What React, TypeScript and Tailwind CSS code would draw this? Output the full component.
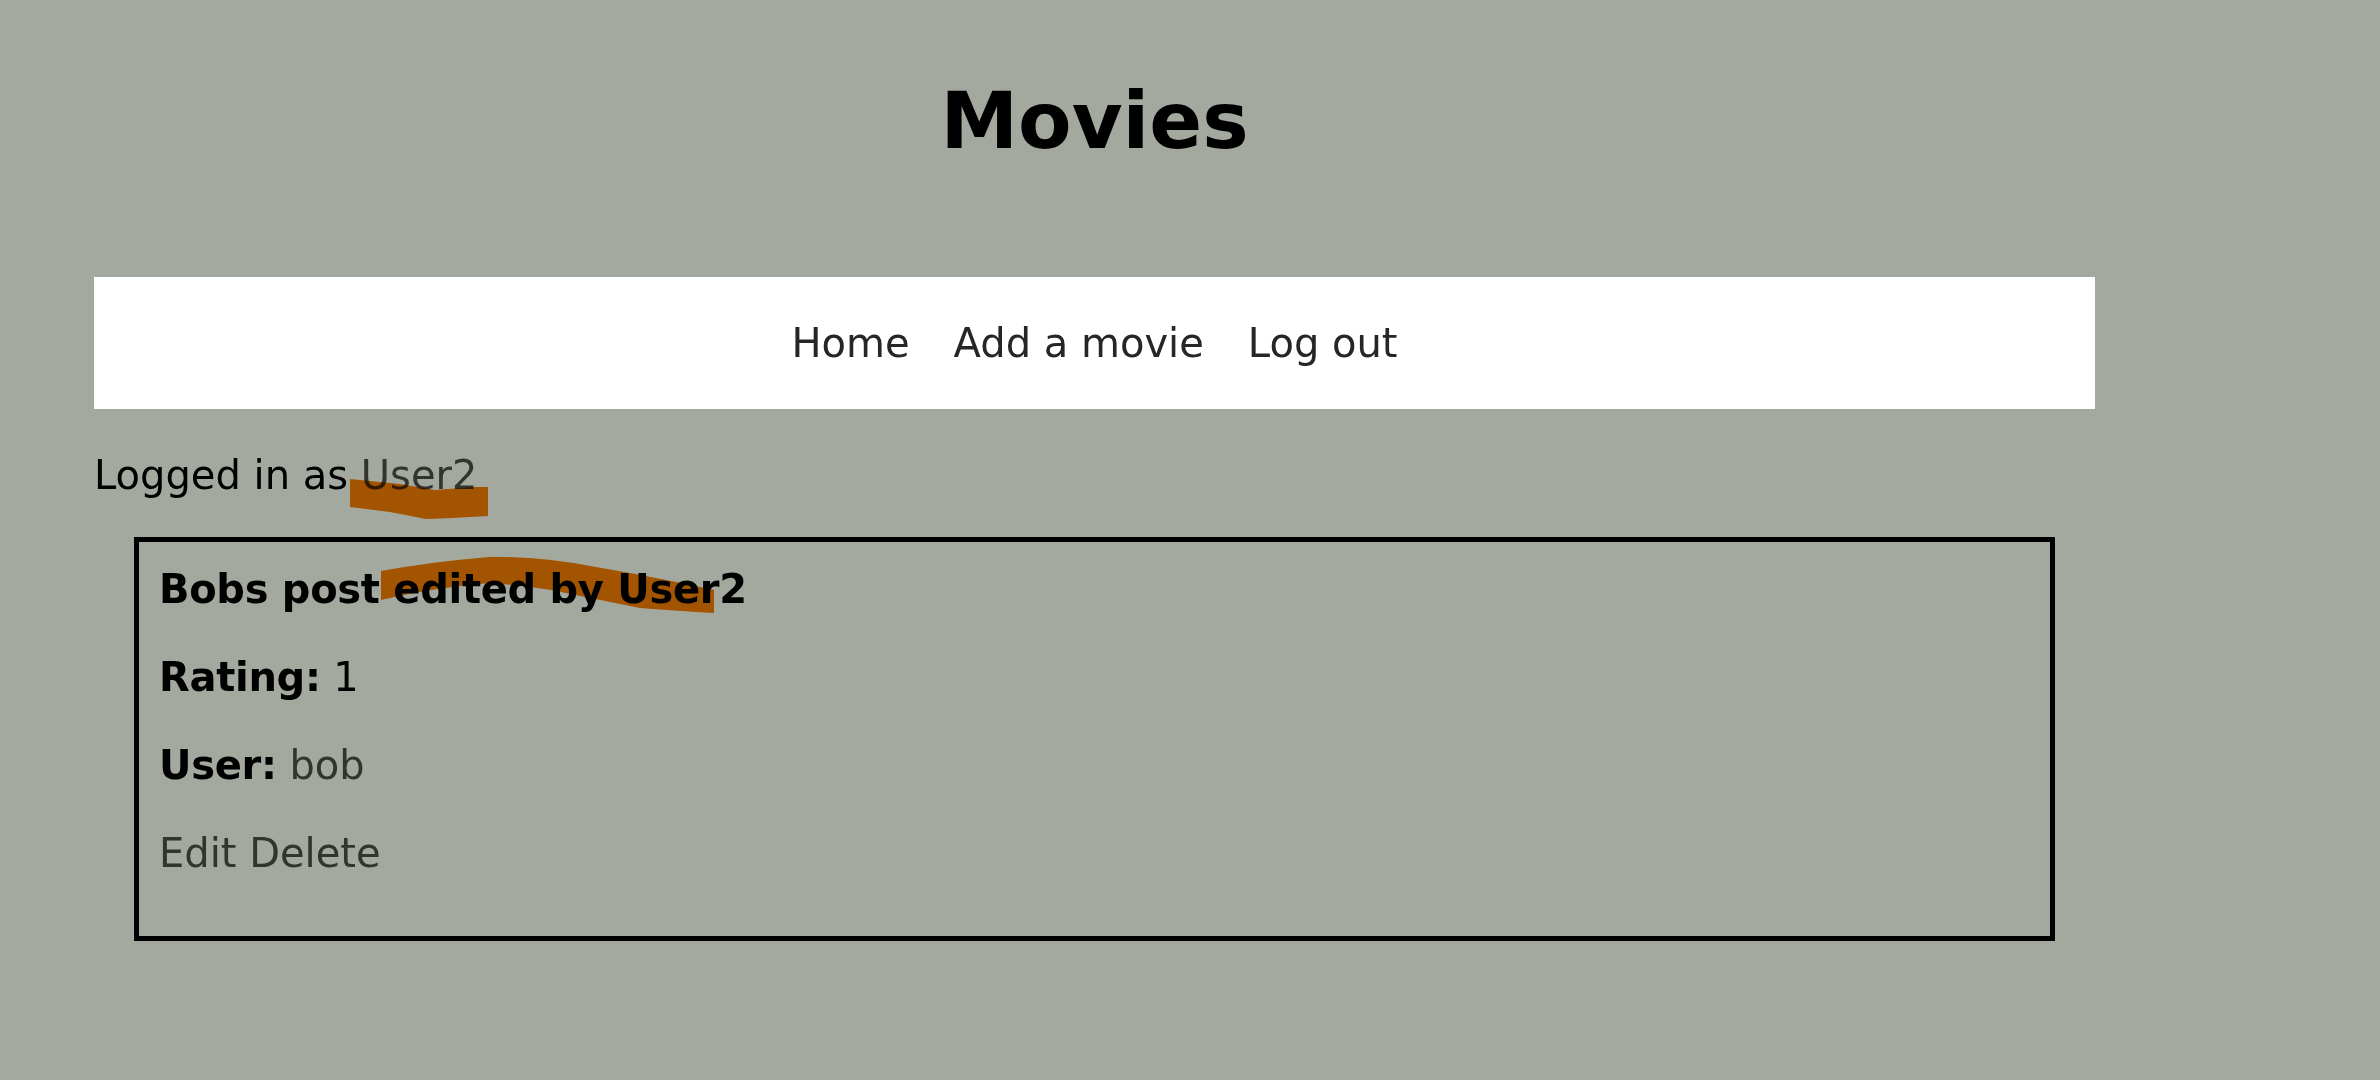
import React from "react";

export default function App() {
  return (
    <div
      className="relative min-h-[1080px] w-[2380px] bg-[#a3a99e] text-black"
      style={{ fontFamily: '"DejaVu Sans", Verdana, sans-serif' }}
    >
      <div className="ml-[94px] w-[2001px] pt-[81px]">
        <h1 className="text-center text-[78px] font-bold leading-[80px]">Movies</h1>

        <nav className="mt-[116px] flex h-[132px] items-center justify-center gap-[44px] bg-white text-[40px] leading-[48px] text-[#262626]">
          <a>Home</a>
          <a>Add a movie</a>
          <a>Log out</a>
        </nav>

        <p className="mt-[42px] text-[40px] leading-[48px]">
          Logged in as <a className="text-[#333330]">User2</a>
        </p>

        <div className="mx-[40px] mt-[38px] border-[5px] border-black pt-[23px] pb-[59px] pl-[20px] text-[40px] leading-[48px]">
          <p className="font-bold tracking-[-0.3px]">Bobs post edited by User2</p>
          <p className="mt-[40px]">
            <span className="font-bold tracking-[-0.3px]">Rating:</span> 1
          </p>
          <p className="mt-[40px]">
            <span className="font-bold tracking-[-0.3px]">User:</span> <a className="text-[#333330]">bob</a>
          </p>
          <p className="mt-[40px] text-[#333330]">
            <a>Edit</a> <a>Delete</a>
          </p>
        </div>
      </div>

      <svg
        className="pointer-events-none absolute left-0 top-0 mix-blend-multiply"
        width="2380"
        height="1080"
        viewBox="0 0 2380 1080"
      >
        <path
          d="M350 479 L400 484 L435 490 L475 487 L488 487 L488 516 L453 518 L426 519 L390 512 L350 507 Z"
          fill="#ff7f00"
        />
        <path
          d="M381 571 Q430 562 489 557 Q540 556 596 567 Q660 578 714 590 L714 613 Q680 611 640 608 Q590 598 551 590 Q520 585 489 583 Q430 588 381 600 Z"
          fill="#ff7f00"
        />
      </svg>
    </div>
  );
}
